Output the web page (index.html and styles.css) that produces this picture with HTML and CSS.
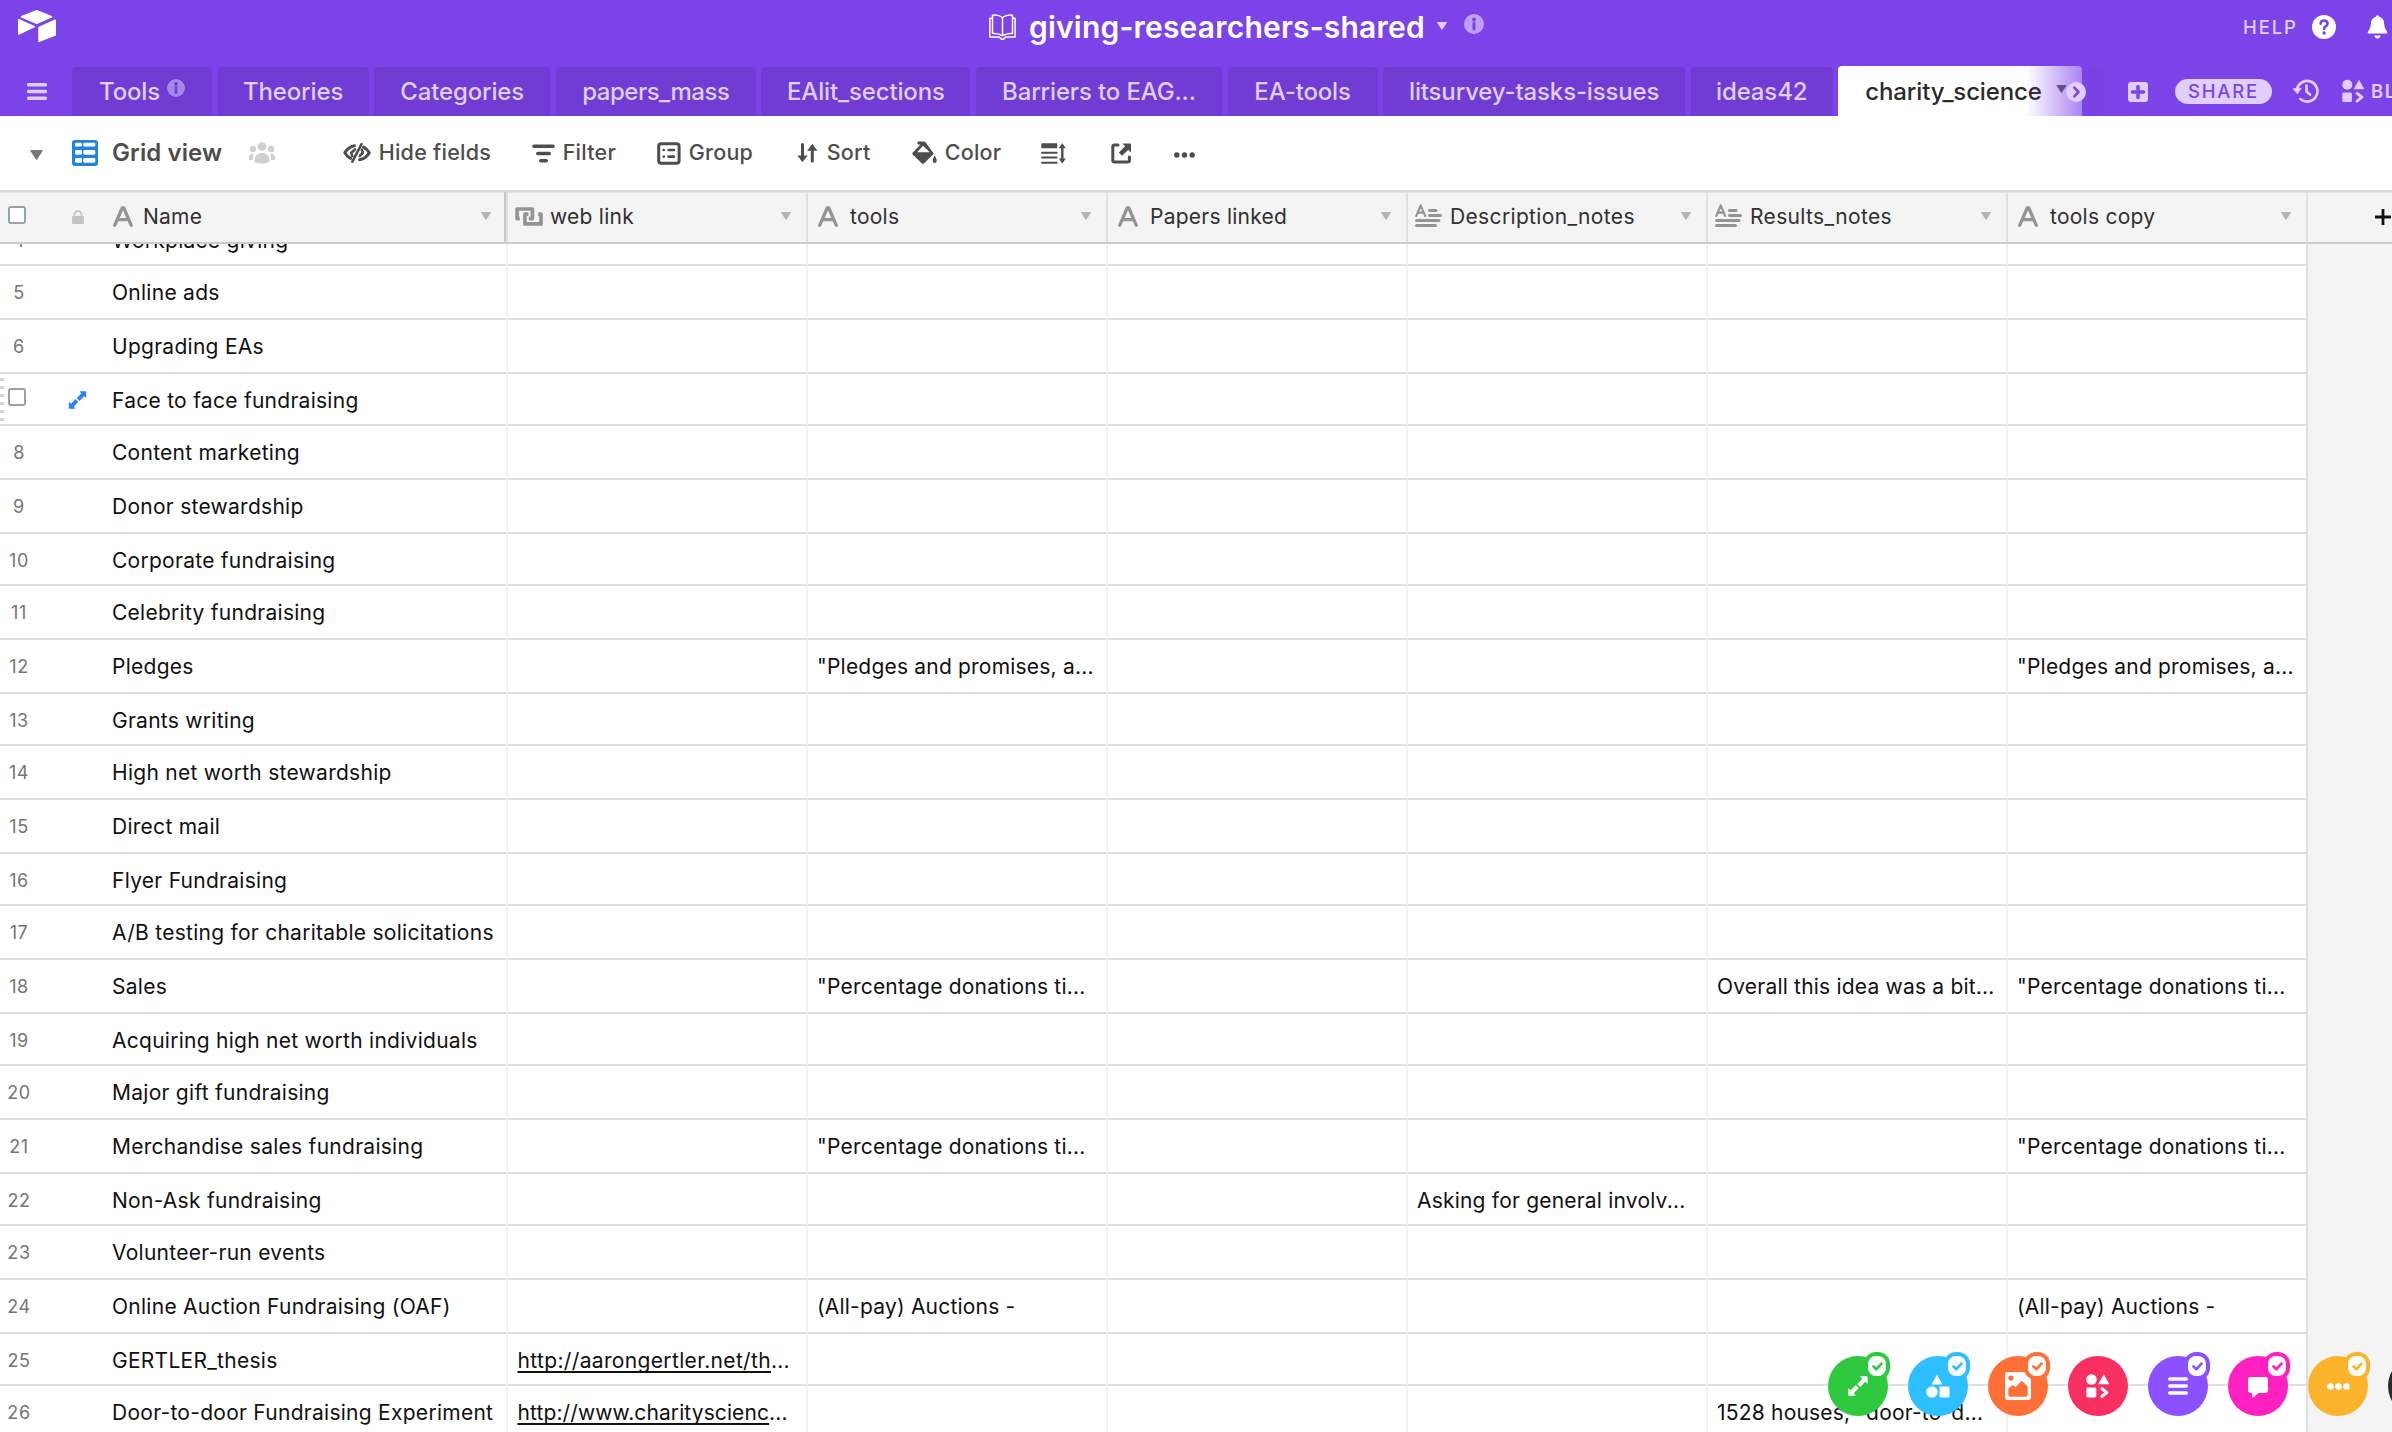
FILE: index.html
```html
<!DOCTYPE html>
<html lang="en">
<head>
<meta charset="utf-8">
<title>giving-researchers-shared</title>
<link rel="stylesheet" href="styles.css">
</head>
<body>
<svg class="defs" aria-hidden="true">
  <symbol id="info" viewBox="0 0 20 20"><path fill-rule="evenodd" d="M10 0a10 10 0 1 0 0 20 10 10 0 0 0 0-20zM10 3.4a2 2 0 1 1 0 4 2 2 0 0 1 0-4zM8.5 9a1.5 1.3 0 0 1 3 0v6.2a1.5 1.3 0 0 1-3 0z"/></symbol>
  <symbol id="caret" viewBox="0 0 10 8"><path d="M.6 0h8.8q.9 0 .4.8L5.5 7.5q-.5.7-1 0L.2.8Q-.3 0 .6 0z"/></symbol>
  <symbol id="text" viewBox="0 0 20 21"><path fill="none" stroke="currentColor" stroke-width="3.3" stroke-linecap="round" stroke-linejoin="round" d="M1.8 19.2 9.2 2h1.6l7.4 17.200M4.700 13.700h10.600"/></symbol>
  <symbol id="long" viewBox="0 0 27 24"><path fill="none" stroke="currentColor" stroke-width="2.1" stroke-linecap="round" stroke-linejoin="round" d="M1.200 12 5.700 1.300 10.200 12M2.900 8.600h5.600"/><path fill="none" stroke="currentColor" stroke-width="3" stroke-linecap="round" d="M14.500 6.500h6.500M14.500 11.500h11M1.500 16.500h22.500M1.500 21.500h19"/></symbol>
  <symbol id="link" viewBox="0 0 28 19"><path fill="none" stroke="currentColor" stroke-width="3.700" stroke-linejoin="round" d="M4.800 11.600H2.100V2h15.300v9.600h-3.600M23.200 7.200H26v9.700H9.900V7.200h3.600"/></symbol>
  <symbol id="blocks" viewBox="0 0 24 24"><circle cx="5.500" cy="5.500" r="5.300"/><path d="m17.800.300 5.300 9.400q.2.600-.5.600h-9.800q-.7 0-.4-.600z"/><rect x=".3" y="13.500" width="10" height="10" rx="1.400"/><path fill="none" stroke="currentColor" stroke-width="3" stroke-linecap="round" stroke-linejoin="round" d="m15.800 14.500 5 4-5 4"/></symbol>
  <symbol id="expand" viewBox="0 0 20 20"><path d="M12.300.300h6.700q.7 0 .7.700v6.700l-2.500-1.900-4.900 5.200-3.100-3.100 5-5zM7.700 19.700H1q-.7 0-.7-.7v-6.700l2.500 1.900 4.900-5.200 3.100 3.100-5 5z"/></symbol>
  <symbol id="badge" viewBox="0 0 26 28"><rect width="26" height="28" rx="12" fill="currentColor"/><rect x="4" y="4" width="18" height="20" rx="8" fill="#fff"/><path d="m9.500 14.500 3 2.700 5-5.500" fill="none" stroke="currentColor" stroke-width="2.700" stroke-linecap="round" stroke-linejoin="round"/></symbol>
</svg>

<header class="top">
  <div class="titlebar">
    <svg class="logo" viewBox="0 0 38 32"><path stroke="#fff" stroke-width="1.500" stroke-linejoin="round" d="m18.700.8 14.800 6-14.800 6.600-15.200-6.600zM.8 9.800 16.200 16.600.8 24zM21 17.400 37.200 10.200V25L21 31.200z"/></svg>
    <div class="base">
      <svg class="book" viewBox="0 0 27 26"><path fill="none" stroke="#fff" stroke-width="1.500" stroke-linejoin="round" d="M13.500 3.500Q9 .3 3.500 1.200v18.400q5.600-.8 10 2.200 4.400-3 10-2.200V1.200Q18 .3 13.500 3.500zV21.500M3.500 4.200H.9v18.900h9.600q1.100 2.200 3 2.200t3-2.200h9.600V4.200h-2.600"/></svg>
      <span>giving-researchers-shared</span>
      <svg class="caret"><use href="#caret"/></svg>
      <svg class="info"><use href="#info"/></svg>
    </div>
    <div class="help">
      <span>HELP</span>
      <svg class="q" viewBox="0 0 24 24"><circle cx="12" cy="12" r="12"/><path fill="none" stroke="#7c43e8" stroke-width="2.600" stroke-linecap="round" d="M8.600 8.700q.3-3.200 3.500-3.200 3.300.1 3.400 3 0 1.700-1.900 2.800-1.500.9-1.500 2.700"/><circle cx="12.100" cy="18" r="1.700" fill="#7c43e8"/></svg>
      <svg class="bell" viewBox="0 0 21 24"><path d="M10.500.3q1.500 0 1.700 1.500 4.700 1.300 4.900 6.700.2 5.200 2.800 8 1.100 2.100-.9 2.100H2q-2 0-.9-2.100 2.600-2.800 2.800-8 .2-5.400 4.900-6.700.2-1.500 1.700-1.500zM7.300 20.500h6.400q-.8 3-3.200 3t-3.200-3z"/></svg>
    </div>
  </div>
  <div class="tabbar">
    <svg class="burger" viewBox="0 0 20 17"><path d="M1.500 1.700h17M1.500 8.500h17M1.500 15.300h17"/></svg>
    <nav class="tabs">
      <div class="tab">Tools<svg class="info"><use href="#info"/></svg></div>
      <div class="tab">Theories</div>
      <div class="tab">Categories</div>
      <div class="tab tight">papers_mass</div>
      <div class="tab">EAlit_sections</div>
      <div class="tab">Barriers to EAG...</div>
      <div class="tab">EA-tools</div>
      <div class="tab">litsurvey-tasks-issues</div>
      <div class="tab">ideas42</div>
      <div class="tab active">charity_science<svg class="caret"><use href="#caret"/></svg></div>
      <div class="tab"></div>
      <div class="fade"></div>
      <svg class="next" viewBox="0 0 20 20"><circle cx="10" cy="10" r="10"/><path d="m8.300 5.700 4.200 4.300-4.200 4.300"/></svg>
    </nav>
    <div class="actions">
      <svg class="add" viewBox="0 0 20 20"><rect width="20" height="20" rx="3"/><path d="M10 4.500v11M4.500 10h11"/></svg>
      <span class="share">SHARE</span>
      <svg class="history" viewBox="0 0 26 24"><path d="M4.200 9.500A10.300 10.300 0 1 1 7.400 20" /><path d="M13.500 6.500v6l3.500 3"/><path class="fill" d="M.5 9.700 8 9.300 4.500 14.500z"/></svg>
      <svg class="blk"><use href="#blocks"/></svg>
      <span class="bl">BLOCKS</span>
    </div>
  </div>
</header>

<div class="toolbar">
  <div class="item lead"><svg class="caret"><use href="#caret"/></svg></div>
  <div class="item view"><svg width="26" height="26" viewBox="0 0 26 26"><rect width="26" height="26" rx="3" fill="#1d86dc"/><g fill="#fff"><rect x="3" y="2.800" width="7" height="3.600" rx="1.200"/><rect x="11.300" y="2.800" width="12" height="3.600" rx="1.200"/><rect x="3" y="10" width="7" height="4.700" rx="1.400"/><rect x="11.300" y="10" width="12" height="4.700" rx="1.400"/><rect x="3" y="18" width="7" height="4.700" rx="1.400"/><rect x="11.300" y="18" width="12" height="4.700" rx="1.400"/></g></svg><b>Grid view</b></div>
  <div class="item"><svg class="people" width="26" height="22" viewBox="0 0 26 22"><circle cx="13" cy="4.500" r="4.300"/><circle cx="4" cy="7" r="3.200"/><circle cx="22" cy="7" r="3.200"/><path d="M5.500 20q-.3-9 7.500-9.300 7.800.3 7.500 9.300-3 1.500-7.500 1.500T5.500 20zM4.800 11.600Q0 11.500 0 15.500V18h3.800q0-4 1-6.400zM21.200 11.600q4.800-.1 4.800 3.900V18h-3.800q0-4-1-6.400z"/></svg></div>
  <div class="item"><svg width="28" height="20" viewBox="0 0 28 20"><g class="ln" stroke-width="3"><path d="M11.500 2.700Q5 4 1.800 9.700 3.700 13.500 7.600 15.300M16.600 16.700Q23 15.500 26.300 9.700 24.500 6.200 20.600 4.100"/><path stroke-width="2.600" d="M18.500 1.200 9.400 18.600"/><path stroke-width="2.600" d="M12 6.500 8.300 9.700l.9 3.300M16.800 13l3-3.300-1-3"/></g></svg><span>Hide fields</span></div>
  <div class="item"><svg width="23" height="19" viewBox="0 0 23 19"><path class="ln" stroke-width="3.600" d="M2 2.200h19M5.800 9.500h11.400M8.800 16.700h5.400"/></svg><span>Filter</span></div>
  <div class="item"><svg width="24" height="23" viewBox="0 0 24 23"><rect x="1.700" y="1.700" width="20.400" height="19.600" rx="2.600" fill="none" stroke="#4d4d4d" stroke-width="3"/><path class="ln" stroke-width="2.600" d="M6.700 8h.1M6.700 14.600h.1M11.600 8h5.400M11.600 14.600h5.400"/></svg><span>Group</span></div>
  <div class="item"><svg width="22" height="20" viewBox="0 0 22 20"><path class="ln" stroke-width="3" d="M5.500 1.500v13M15.300 18V5.500"/><path d="M.4 12.500h10.200L5.500 19.300zM10.200 7.800h10.200L15.300.7z"/></svg><span>Sort</span></div>
  <div class="item"><svg width="25" height="24" viewBox="0 0 25 24"><path fill-rule="evenodd" d="M5.300 1.700q0-1.200 1.200-1.200H12q1.200 0 1.700 1l8.200 11.200-10 9.700q-1 .9-2 0L.8 13.600q-1-1 0-2L8.500 3.500H6.500q-1.200-.4-1.200-1.800zM11 4.700 5.200 11.200h12.600zM22.700 14.300q2 3.800 2 5.500 0 2.200-2 2.200t-2-2.200q0-1.700 2-5.500z"/></svg><span>Color</span></div>
  <div class="item"><svg width="26" height="21" viewBox="0 0 26 21"><rect x=".3" y=".3" width="16" height="5" rx=".8"/><path class="ln" stroke-width="1.900" d="M1 9.700h14.700M1 14.500h14.700M1 19.700h14.700"/><path class="ln" stroke-width="2.400" d="M21.300 4v12"/><path d="M17.800 5.200 21.300.3l3.500 4.900zM17.800 15.400h7l-3.500 5z"/></svg></div>
  <div class="item"><svg width="21" height="21" viewBox="0 0 21 21"><path class="ln" stroke-width="3" d="M7 1.900H3.500q-1.700 0-1.700 1.700v13.700q0 1.700 1.700 1.700h13.200q1.700 0 1.700-1.700V14"/><path d="M11.300.4h8q.7 0 .7.700v8.400l-2.700-2.800-6.300 6-3.100-3.200 6.200-6.200z"/></svg></div>
  <div class="item"><svg class="dots" width="21" height="6" viewBox="0 0 21 6"><circle cx="2.800" cy="3" r="2.700"/><circle cx="10.500" cy="3" r="2.700"/><circle cx="18.200" cy="3" r="2.700"/></svg></div>
</div>

<main class="grid">
  <div class="head">
    <div class="ctl"><i class="check"></i><svg class="lock" viewBox="0 0 12 14"><rect y="6" width="12" height="8" rx="1"/><path fill="none" stroke="currentColor" stroke-width="1.800" d="M2.500 7V4.500a3.500 3.500 0 0 1 7 0V7"/></svg></div>
    <div class="hcell name"><svg class="t"><use href="#text"/></svg><span>Name</span><svg class="caret"><use href="#caret"/></svg></div>
    <div class="hcell wide"><svg class="k"><use href="#link"/></svg><span>web link</span><svg class="caret"><use href="#caret"/></svg></div>
    <div class="hcell"><svg class="t"><use href="#text"/></svg><span>tools</span><svg class="caret"><use href="#caret"/></svg></div>
    <div class="hcell"><svg class="t"><use href="#text"/></svg><span>Papers linked</span><svg class="caret"><use href="#caret"/></svg></div>
    <div class="hcell wide notes"><svg class="l"><use href="#long"/></svg><span>Description_notes</span><svg class="caret"><use href="#caret"/></svg></div>
    <div class="hcell wide notes"><svg class="l"><use href="#long"/></svg><span>Results_notes</span><svg class="caret"><use href="#caret"/></svg></div>
    <div class="hcell"><svg class="t"><use href="#text"/></svg><span>tools copy</span><svg class="caret"><use href="#caret"/></svg></div>
    <div class="plus"><svg viewBox="0 0 16 16"><path d="M8 0v16M0 8h16"/></svg></div>
  </div>
  <div class="rows" id="rows"></div>
</main>

<aside class="dock">
  <div class="fab green"><svg class="icon" width="20" height="22" viewBox="0 0 20 22"><use href="#expand" width="20" height="22"/></svg><svg class="badge"><use href="#badge"/></svg></div>
  <div class="fab blue"><svg class="icon" width="24" height="24" viewBox="0 0 24 24"><path d="M11 .5 16.300 10.500H5.700z"/><circle cx="6" cy="18" r="5.800"/><rect x="13.500" y="12.500" width="10" height="11" rx=".8"/></svg><svg class="badge"><use href="#badge"/></svg></div>
  <div class="fab orange"><svg class="icon" width="26" height="28" viewBox="0 0 26 28"><path fill-rule="evenodd" d="M3 0h20q3 0 3 3v22q0 3-3 3H3q-3 0-3-3V3q0-3 3-3zM3.300 16.500V23q0 1.700 1.700 1.700h16q1.700 0 1.700-1.700v-8.800l-5.200-4.700q-.8-.6-1.500 0l-5.300 5.600-2.400-1.600q-.8-.5-1.500.1zM6 3.400a2.700 2.700 0 1 0 0 5.400 2.700 2.700 0 0 0 0-5.400z"/></svg><svg class="badge"><use href="#badge"/></svg></div>
  <div class="fab red"><svg class="icon" width="24" height="26"><use href="#blocks"/></svg></div>
  <div class="fab purple"><svg class="icon" width="20" height="18" viewBox="0 0 20 18"><path fill="none" stroke="#fff" stroke-width="3.600" stroke-linecap="round" d="M1.800 2h16.400M1.800 9h16.400M1.800 16h16.400"/></svg><svg class="badge"><use href="#badge"/></svg></div>
  <div class="fab pink"><svg class="icon chat" width="20" height="21" viewBox="0 0 20 21"><path d="M3 0h14q3 0 3 3v10q0 3-3 3h-6.500L5.200 20.500q-1 .6-1-.6V16H3q-3 0-3-3V3q0-3 3-3z"/></svg><svg class="badge"><use href="#badge"/></svg></div>
  <div class="fab yellow"><svg class="icon" width="23" height="7" viewBox="0 0 23 7"><circle cx="3.500" cy="3.500" r="3.300"/><circle cx="11.500" cy="3.500" r="3.300"/><circle cx="19.500" cy="3.500" r="3.300"/></svg><svg class="badge"><use href="#badge"/></svg></div>
  <div class="fab dark"></div>
</aside>
<script src="rows.js"></script>
</body>
</html>
```
FILE: styles.css
```css
* { box-sizing: border-box; }
body { margin: 0; width: 2392px; height: 1432px; overflow: hidden; position: relative; background: #fff; color: #111; font: 400 21px/1 Inter, "Liberation Sans", sans-serif; }
svg { display: block; flex: none; fill: currentColor; }
.defs { position: absolute; width: 0; height: 0; }
.caret { width: 10px; height: 8px; }

.top { height: 116px; background: #7c43e8; color: #fff; overflow: hidden; }
.titlebar { height: 66px; display: grid; grid-template-columns: 989px 1fr 149px; }
.logo { width: 38px; height: 32px; margin: 10px 0 0 18px; }
.base { display: flex; align-items: flex-start; font-size: 30px; font-weight: 600; letter-spacing: .2px; }
.base .book { width: 27px; height: 26px; margin-top: 14px; }
.base span { margin: 0 12px 0 13px; line-height: 54px; }
.base .caret { margin: 22px 17px 0 0; opacity: .75; }
.base .info { width: 20px; height: 20px; margin-top: 14px; opacity: .5; }
.help { display: flex; align-items: flex-start; font-size: 18.500px; font-weight: 500; }
.help span { width: 69px; line-height: 54px; letter-spacing: 1.900px; color: #dfcff9; }
.help .q { width: 24px; height: 24px; margin: 15px 31px 0 0; }
.help .bell { width: 21px; height: 24px; margin-top: 15px; }

.tabbar { height: 50px; display: flex; color: #dfcff9; }
.burger { width: 20px; height: 17px; margin: 17px 25px 0 27px; stroke: #dfcff9; stroke-width: 3.400; stroke-linecap: round; }
.tabs { position: relative; flex: none; width: 2040px; display: grid; grid-template-columns: 140px 151px 176px 200px 209px 246px 150px 302px 142px 244px 25px; column-gap: 5.600px; overflow: hidden; font-size: 24px; font-weight: 500; letter-spacing: -.15px; }
.tab { margin-top: 1px; display: flex; justify-content: center; line-height: 49px; white-space: nowrap; border-radius: 4px 4px 0 0; background: rgba(0, 0, 0, .09); }
.tab.tight { letter-spacing: -.5px; }
.tab .info { width: 18px; height: 18px; margin: 12px 0 0 7px; opacity: .5; }
.tab.active { margin-top: 0; justify-content: flex-start; padding-left: 27px; line-height: 51px; background: #fff; color: #2b2b2b; }
.tab .caret { color: #555; width: 11px; margin: 19px 0 0 14px; }
.fade { position: absolute; right: 0; top: 0; width: 86px; height: 50px; background: linear-gradient(90deg, rgba(124, 67, 232, 0), #7c43e8); }
.next { position: absolute; left: 1994px; top: 16px; width: 20px; height: 20px; color: #dfcff9; }
.next path { fill: none; stroke: #7c43e8; stroke-width: 2.600; stroke-linecap: round; stroke-linejoin: round; }
.actions { flex: none; display: flex; align-items: flex-start; padding-left: 16px; font-size: 18.500px; font-weight: 500; white-space: nowrap; }
.add { width: 20px; height: 20px; margin: 16px 27px 0 0; }
.add path { stroke: #7c43e8; stroke-width: 3.400; stroke-linecap: round; }
.share { width: 97px; height: 25px; margin: 13px 21px 0 0; padding-left: 13px; border-radius: 12.500px; background: #dfcff9; color: #7c43e8; line-height: 25px; letter-spacing: 1.800px; }
.history { width: 26px; height: 24px; margin: 13px 23px 0 0; }
.history path { fill: none; stroke: currentColor; stroke-width: 2.700; stroke-linecap: round; stroke-linejoin: round; }
.history .fill { fill: currentColor; stroke-width: 1; }
.blk { width: 23px; height: 24px; margin: 13px 6px 0 0; }
.bl { width: 21px; overflow: hidden; line-height: 51px; letter-spacing: 1.500px; font-weight: 600; }

.toolbar { height: 74px; display: grid; grid-template-columns: 42px 177px 94px 189px 125px 140px 115px 129px 70px 63px 40px; padding-left: 30px; color: #4d4d4d; font-size: 21.500px; font-weight: 500; letter-spacing: .25px; white-space: nowrap; }
.item { display: flex; align-items: center; gap: 7.700px; }
.lead .caret { width: 13px; height: 10px; margin-top: 4px; color: #777; }
.view { gap: 14px; font-size: 24px; letter-spacing: .1px; }
.view b { font-weight: 600; }
.people { color: #d0d0d0; }
.dots { margin-top: 4px; }
.ln { fill: none; stroke: #4d4d4d; stroke-linecap: round; stroke-linejoin: round; }

.head, .row { display: grid; grid-template-columns: 112px 396px repeat(6, 300px) 1fr; grid-template-rows: 100%; }
.head { position: relative; z-index: 1; height: 54px; border-top: 2px solid #d9d9d9; border-bottom: 2px solid #ccc; background: #f4f4f4; box-shadow: inset 0 1px #e4e4e4; color: #303030; letter-spacing: .25px; }
.ctl { display: flex; align-items: flex-start; }
.check { width: 18px; height: 18px; border: 2px solid #94a3a8; border-radius: 3px; background: #fff; }
.head .check { margin: 14px 46px 0 8px; }
.lock { width: 12px; height: 14px; margin-top: 18px; color: #c4c4c4; }
.hcell { display: flex; align-items: center; padding: 0 15px 2px 10px; border-right: 2px solid #dde1e3; white-space: nowrap; }
.hcell span { flex: 1; }
.hcell svg { color: #949494; }
.hcell .caret { color: #b4b4b4; }
.hcell.name { padding-left: 1px; box-shadow: inset -2px 0 #c9c9c9; }
.t { width: 20px; height: 21px; margin-right: 12px; }
.name .t { margin-right: 10px; }
.hcell.wide { padding-left: 7px; }
.k { width: 28px; height: 19px; margin-right: 7px; }
.l { width: 27px; height: 24px; margin-right: 8px; }
.notes { letter-spacing: .35px; }
.plus { padding: 17px 0 0 67px; }
.plus svg { width: 16px; height: 16px; stroke: #111; stroke-width: 2.800; }

.rows { margin-top: -30px; background: #f4f4f4; }
.row { height: 54px; }
.row:nth-child(3n+1) { height: 52px; }
.row > div { border-bottom: 2px solid #dde1e3; background: #fff; }
.row > div:last-child { border-bottom: 0; background: none; }
.cell { border-right: 2px solid #f1f2f3; padding-left: 9px; line-height: 54px; height: 100%; white-space: nowrap; letter-spacing: .2px; overflow: hidden; }
.cell.primary { padding-left: 0; letter-spacing: .27px; }
.row > .cell:nth-child(8) { border-right-color: #dde1e3; }
.cell u { margin-left: .5px; text-decoration-thickness: 2px; text-underline-offset: 3px; text-decoration-skip-ink: none; letter-spacing: .35px; }
.cell u.dense { letter-spacing: .1px; }
.num { width: 112px; line-height: 54px; font-size: 18px; letter-spacing: .6px; color: #757575; overflow: hidden; }
.num span { display: block; width: 38px; text-align: center; }
.num.hover { display: flex; align-items: flex-start; }
.handle { width: 4px; height: 45px; margin-top: 4px; background: repeating-linear-gradient(#d2d2d2 0 3px, transparent 3px 8px); }
.num .check { margin: 14px 42px 0 4px; }
.open { width: 19px; height: 18px; margin-top: 17px; color: #2d7ff9; }

.dock { position: absolute; left: 1828px; top: 1356px; display: flex; gap: 20px; }
.fab { position: relative; flex: none; width: 60px; height: 60px; border-radius: 50%; background: currentColor; display: flex; align-items: center; justify-content: center; }
.fab .icon { fill: #fff; color: #fff; }
.fab .chat { margin-top: 3px; }
.badge { position: absolute; left: 36px; top: -4px; width: 26px; height: 28px; }
.green { color: #2fc940; }
.blue { color: #2dbfff; }
.orange { color: #ff7038; }
.red { color: #f82f60; }
.purple { color: #8b50ff; }
.pink { color: #ff20c2; }
.yellow { color: #fcb32c; }
.dark { color: #2a2a2a; }
```
FILE: rows.js
```js
const pledges = '"Pledges and promises, a...';
const percent = '"Percentage donations ti...';

// [name, web link, tools, papers linked, description, results, tools copy]
const records = [
  ['Workplace giving'],
  ['Online ads'],
  ['Upgrading EAs'],
  ['Face to face fundraising'],
  ['Content marketing'],
  ['Donor stewardship'],
  ['Corporate fundraising'],
  ['Celebrity fundraising'],
  ['Pledges', '', pledges, '', '', '', pledges],
  ['Grants writing'],
  ['High net worth stewardship'],
  ['Direct mail'],
  ['Flyer Fundraising'],
  ['A/B testing for charitable solicitations'],
  ['Sales', '', percent, '', '', 'Overall this idea was a bit...', percent],
  ['Acquiring high net worth individuals'],
  ['Major gift fundraising'],
  ['Merchandise sales fundraising', '', percent, '', '', '', percent],
  ['Non-Ask fundraising', '', '', '', 'Asking for general involv...'],
  ['Volunteer-run events'],
  ['Online Auction Fundraising (OAF)', '', '(All-pay) Auctions -', '', '', '', '(All-pay) Auctions -'],
  ['GERTLER_thesis', '<u>http://aarongertler.net/th</u>...'],
  ['Door-to-door Fundraising Experiment', '<u class="dense">http://www.charityscienc</u>...', '', '', '', '1528 houses, "door-to-d...']
];

const FIRST = 4;
const HOVERED = 7;
const hoverControls = '<div class="num hover"><i class="handle"></i><i class="check"></i><svg class="open"><use href="#expand"/></svg></div>';

document.getElementById('rows').innerHTML = records.map((record, i) => {
  const n = FIRST + i;
  const lead = n === HOVERED ? hoverControls : `<div class="num"><span>${n}</span></div>`;
  let cells = '';
  for (let c = 0; c < 7; c++) {
    cells += `<div class="cell${c ? '' : ' primary'}">${record[c] || ''}</div>`;
  }
  return `<div class="row">${lead}${cells}<div></div></div>`;
}).join('');
```
